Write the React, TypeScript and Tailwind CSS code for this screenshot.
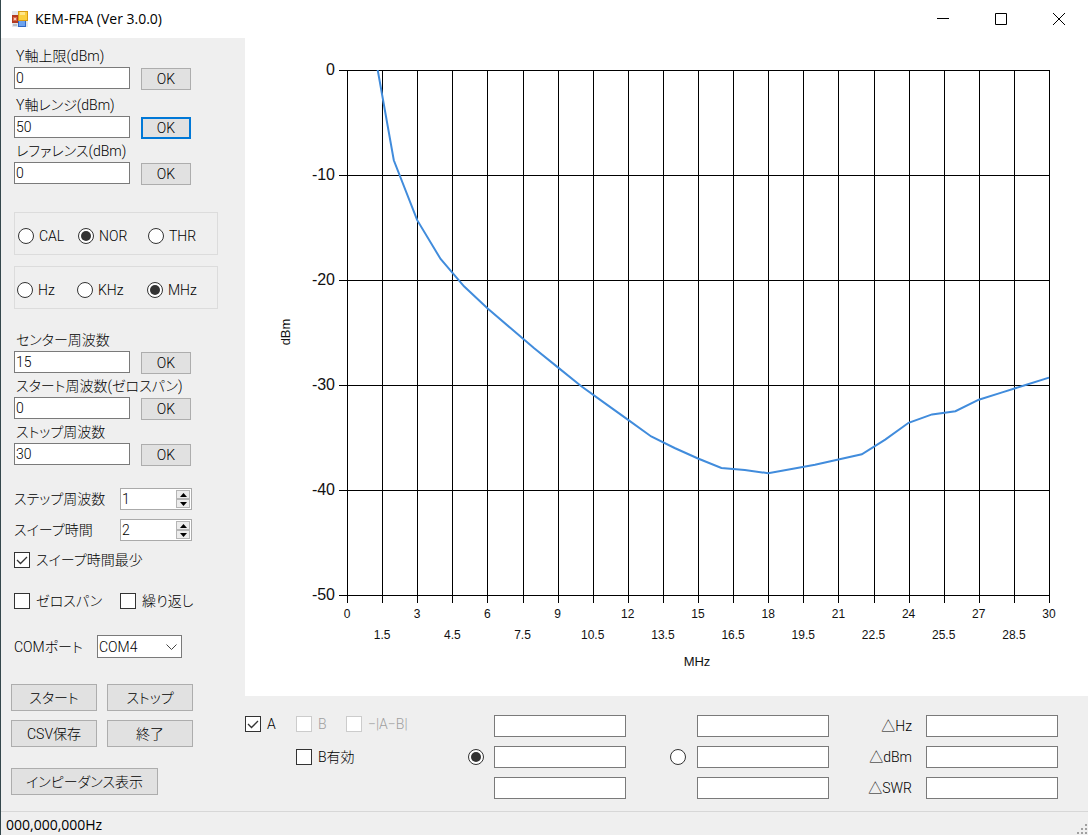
import type { ReactNode } from 'react'

// ── Sweep data: one reading per MHz, starting at 1 MHz ─────────
const READINGS = [
  3.9, -8.6, -14.3, -18, -20.6, -22.7, -24.6, -26.5, -28.3, -30.1, -31.7, -33.3, -34.9, -36, -37,
  -37.9, -38.1, -38.4, -38, -37.6, -37.1, -36.6, -35.2, -33.6, -32.8, -32.5, -31.4, -30.7, -30, -29.3,
]

const PLOT = { left: 102, top: 32, width: 702, height: 525 }
const X_TICKS = Array.from({ length: 21 }, (_, i) => i * 1.5)
const Y_TICKS = [0, -10, -20, -30, -40, -50]

const toX = (mhz: number) => PLOT.left + (mhz / 30) * PLOT.width
const toY = (dbm: number) => PLOT.top + (-dbm / 50) * PLOT.height

const BUTTON = 'border border-[#adadad] bg-[#e1e1e1] text-center hover:border-[#0078d7] hover:bg-[#e5f1fb]'
const TEXT_BOX = 'h-[22px] border border-[#7a7a7a] bg-white px-px text-sm leading-5 outline-none focus:border-[#0078d7]'

// ── Title bar ──────────────────────────────────────────────────
function AppIcon() {
  return (
    <svg width="18" height="18" viewBox="0 0 18 18" aria-hidden="true">
      <rect x="1" y="1" width="16" height="16" fill="#e3e6ea" />
      <rect x="1" y="5" width="6" height="8" fill="#b33a20" />
      <rect x="2" y="7" width="4" height="4" fill="#d9694a" />
      <rect x="3" y="8" width="2" height="2" fill="#f6c9b8" />
      <rect x="7" y="1" width="10" height="10" fill="#d99a12" />
      <rect x="8" y="2" width="8" height="8" fill="#fbcf3d" />
      <rect x="9" y="2" width="5" height="3" fill="#ffe68a" />
      <rect x="7" y="11" width="8" height="6" fill="#2f66c4" />
      <rect x="8" y="11" width="6" height="5" fill="#6ea3ee" />
      <rect x="2" y="14" width="4" height="2" fill="#b9bec6" />
    </svg>
  )
}

function TitleBar() {
  return (
    <header className="flex h-[38px] items-center bg-white pl-[10px] font-['Open_Sans',sans-serif] text-sm font-normal">
      <AppIcon />
      <h1 className="ml-[6px] flex-1">KEM-FRA (Ver 3.0.0)</h1>
      <button type="button" aria-label="Minimize" className="flex h-9 w-[58px] items-center justify-center hover:bg-gray-200">
        <svg width="12" height="12" viewBox="0 0 12 12" stroke="#000" fill="none"><path d="M0 5.5h12" /></svg>
      </button>
      <button type="button" aria-label="Maximize" className="flex h-9 w-[58px] items-center justify-center hover:bg-gray-200">
        <svg width="12" height="12" viewBox="0 0 12 12" stroke="#000" fill="none"><path d="M.5.5h11v11H.5z" /></svg>
      </button>
      <button type="button" aria-label="Close" className="flex h-9 w-[58px] items-center justify-center hover:bg-red-500">
        <svg width="12" height="12" viewBox="0 0 12 12" stroke="#000" fill="none"><path d="M0 0l12 12M12 0L0 12" /></svg>
      </button>
    </header>
  )
}

// ── Small controls ─────────────────────────────────────────────
function Field({ id, label, value, active }: { id: string; label: string; value: string; active?: boolean }) {
  return (
    <div>
      <label htmlFor={id} className="mb-[2px] block pl-[2px] leading-[18px]">{label}</label>
      <div className="flex items-end gap-[11px]">
        <input id={id} type="text" defaultValue={value} className={`${TEXT_BOX} mb-px w-[116px]`} />
        <button
          type="button"
          className={`h-[22px] w-[50px] ${active ? 'border-2 border-[#0078d7] bg-[#e1e1e1] leading-[18px]' : `${BUTTON} leading-5`}`}
        >
          OK
        </button>
      </div>
    </div>
  )
}

function Radio({ name, label, ariaLabel, checked }: { name: string; label?: string; ariaLabel?: string; checked?: boolean }) {
  return (
    <label className="flex items-center gap-[5px] leading-[18px]">
      <span className="relative size-4 shrink-0">
        <input
          type="radio"
          name={name}
          aria-label={ariaLabel}
          defaultChecked={checked}
          className="peer block size-4 appearance-none rounded-full border border-[#333] bg-white"
        />
        <span className="pointer-events-none absolute inset-[3px] hidden rounded-full bg-[#333] peer-checked:block" />
      </span>
      {label}
    </label>
  )
}

function Check({ children, checked, disabled }: { children: ReactNode; checked?: boolean; disabled?: boolean }) {
  return (
    <label className={`flex items-center gap-[6px] leading-[18px] ${disabled ? 'text-[#a0a0a0]' : ''}`}>
      <span className="relative size-4 shrink-0">
        <input
          type="checkbox"
          defaultChecked={checked}
          disabled={disabled}
          className="peer block size-4 appearance-none border border-[#333] bg-white disabled:border-[#ccc]"
        />
        <svg
          viewBox="0 0 16 16"
          className="pointer-events-none absolute inset-0 hidden size-4 fill-none stroke-[#333] peer-checked:block"
        >
          <path d="M3 8l3.5 3.5L13 5" strokeWidth="1.3" />
        </svg>
      </span>
      {children}
    </label>
  )
}

function Stepper({ id, label, value }: { id: string; label: string; value: string }) {
  return (
    <div className="flex h-[22px] items-center">
      <label htmlFor={id} className="w-[106px] leading-[18px]">{label}</label>
      <div className="flex h-[22px] w-[72px] border border-[#aaa] bg-white">
        <input id={id} type="text" inputMode="numeric" defaultValue={value} className="w-0 flex-1 px-px text-sm leading-5 outline-none" />
        <div className="flex w-4 flex-col p-px">
          <button type="button" aria-label={`${label} +`} className="flex h-[9px] items-center justify-center border border-[#b5b5b5] bg-[#ececec]">
            <svg width="7" height="4" viewBox="0 0 7 4"><path d="M0 4L3.5 0L7 4z" /></svg>
          </button>
          <button type="button" aria-label={`${label} -`} className="flex h-[9px] items-center justify-center border border-[#b5b5b5] bg-[#ececec]">
            <svg width="7" height="4" viewBox="0 0 7 4"><path d="M0 0L3.5 4L7 0z" /></svg>
          </button>
        </div>
      </div>
    </div>
  )
}

// ── Left panel ─────────────────────────────────────────────────
function Sidebar() {
  return (
    <aside className="w-[244px] shrink-0 pt-[9px] pb-4">
      <div className="px-[13px]">
        <Field id="y-max" label="Y軸上限(dBm)" value="0" />
        <div className="mt-[6px] flex flex-col gap-[3px]">
          <Field id="y-range" label="Y軸レンジ(dBm)" value="50" active />
          <Field id="reference" label="レファレンス(dBm)" value="0" />
        </div>

        <fieldset className="mt-[27px] grid h-[43px] w-[204px] grid-cols-[60px_70px_1fr] items-center border border-[#dcdcdc] pl-[3px] pt-[5px]">
          <Radio name="mode" label="CAL" />
          <Radio name="mode" label="NOR" checked />
          <Radio name="mode" label="THR" />
        </fieldset>
        <fieldset className="mt-[11px] grid h-[43px] w-[204px] grid-cols-[60px_70px_1fr] items-center border border-[#dcdcdc] pl-[2px] pt-[5px]">
          <Radio name="unit" label="Hz" />
          <Radio name="unit" label="KHz" />
          <Radio name="unit" label="MHz" checked />
        </fieldset>

        <div className="mt-[22px] flex flex-col gap-[3px]">
          <Field id="center" label="センター周波数" value="15" />
          <Field id="start" label="スタート周波数(ゼロスパン)" value="0" />
          <Field id="stop" label="ストップ周波数" value="30" />
        </div>

        <div className="mt-[22px] flex flex-col gap-[9px]">
          <Stepper id="step" label="ステップ周波数" value="1" />
          <Stepper id="sweep" label="スイープ時間" value="2" />
        </div>
        <div className="mt-[10px]">
          <Check checked>スイープ時間最少</Check>
        </div>
        <div className="mt-[23px] grid grid-cols-[106px_1fr]">
          <Check>ゼロスパン</Check>
          <Check>繰り返し</Check>
        </div>

        <div className="mt-[25px] flex items-center">
          <label htmlFor="com-port" className="w-[83px]">COMポート</label>
          <div className="relative">
            <select id="com-port" defaultValue="COM4" className="block h-[23px] w-[85px] appearance-none border border-[#7a7a7a] bg-white pl-px text-sm leading-5">
              <option>COM4</option>
            </select>
            <svg width="11" height="7" viewBox="0 0 11 7" className="pointer-events-none absolute right-[5px] top-[9px] fill-none stroke-[#444]">
              <path d="M.5.5l5 5l5-5" />
            </svg>
          </div>
        </div>
      </div>

      <div className="mt-[26px] grid grid-cols-[86px_86px] gap-x-[10px] gap-y-[9px] px-[10px]">
        <button type="button" className={`h-[27px] ${BUTTON}`}>スタート</button>
        <button type="button" className={`h-[27px] ${BUTTON}`}>ストップ</button>
        <button type="button" className={`h-[27px] ${BUTTON}`}>CSV保存</button>
        <button type="button" className={`h-[27px] ${BUTTON}`}>終了</button>
      </div>
      <button type="button" className={`ml-[10px] mt-[21px] block h-[27px] w-[147px] ${BUTTON}`}>インピーダンス表示</button>
    </aside>
  )
}

// ── Response chart ─────────────────────────────────────────────
function Chart() {
  const bottom = PLOT.top + PLOT.height
  const right = PLOT.left + PLOT.width
  const points = READINGS.map((dbm, i) => `${toX(i + 1)},${toY(dbm)}`).join(' ')

  return (
    <svg viewBox="0 0 843 658" className="block w-full bg-white font-['Liberation_Sans',sans-serif] font-normal" role="img" aria-label="dBm / MHz">
      <defs>
        <clipPath id="plot">
          <rect x={PLOT.left} y={PLOT.top} width={PLOT.width + 2} height={PLOT.height} />
        </clipPath>
      </defs>
      <g stroke="#000" shapeRendering="crispEdges">
        {X_TICKS.map(t => {
          const x = Math.round(toX(t)) + 0.5
          return <line key={t} x1={x} x2={x} y1={PLOT.top} y2={bottom + 8} />
        })}
        {Y_TICKS.map(t => {
          const y = Math.round(toY(t)) + 0.5
          return <line key={t} x1={PLOT.left - 8} x2={right + 1} y1={y} y2={y} />
        })}
      </g>
      <polyline points={points} fill="none" stroke="#418cdc" strokeWidth="2" clipPath="url(#plot)" />
      <g fontSize="16" textAnchor="end" fill="#111">
        {Y_TICKS.map(t => (
          <text key={t} x={PLOT.left - 12} y={toY(t) + 5}>{t}</text>
        ))}
      </g>
      <g fontSize="12" textAnchor="middle" fill="#111">
        {X_TICKS.map((t, i) => (
          <text key={t} x={toX(t)} y={bottom + (i % 2 ? 44 : 23)}>{t}</text>
        ))}
      </g>
      <g fontSize="13" textAnchor="middle" fill="#111">
        <text x={PLOT.left + PLOT.width / 2 - 1} y="628">MHz</text>
        <text transform="translate(45 294) rotate(-90)">dBm</text>
      </g>
    </svg>
  )
}

// ── Traces and markers ─────────────────────────────────────────
function MarkerBoxes({ name }: { name: string }) {
  return (
    <div className="flex flex-col gap-[9px]">
      {['Hz', 'dBm', 'SWR'].map(unit => (
        <input key={unit} type="text" aria-label={`${name} ${unit}`} className={`${TEXT_BOX} w-[132px]`} />
      ))}
    </div>
  )
}

function MarkerPanel() {
  return (
    <div className="flex items-center pb-3 pr-[30px] pt-[19px]">
      <div className="grid flex-1 grid-cols-[51px_50px_1fr] gap-y-[15px] self-start">
        <Check checked>A</Check>
        <Check disabled>B</Check>
        <Check disabled>−|A−B|</Check>
        <div className="col-span-2 col-start-2">
          <Check>B有効</Check>
        </div>
      </div>
      <div className="flex items-center gap-[10px]">
        <Radio name="marker" ariaLabel="Marker 1" checked />
        <MarkerBoxes name="Marker 1" />
      </div>
      <div className="ml-[44px] flex items-center gap-[11px]">
        <Radio name="marker" ariaLabel="Marker 2" />
        <MarkerBoxes name="Marker 2" />
      </div>
      <div className="ml-[35px] flex flex-col gap-[9px]">
        {['Hz', 'dBm', 'SWR'].map(unit => (
          <label key={unit} className="flex h-[22px] items-center gap-[14px]">
            <span className="w-12 text-right whitespace-nowrap">△{unit}</span>
            <input type="text" className={`${TEXT_BOX} w-[132px]`} />
          </label>
        ))}
      </div>
    </div>
  )
}

function StatusBar() {
  return (
    <footer className="flex h-6 items-center justify-between border-t border-[#d7d7d7] pl-[5px] font-['Open_Sans',sans-serif] text-sm font-normal">
      <span className="pt-[3px]">000,000,000Hz</span>
      <svg width="12" height="12" viewBox="0 0 12 12" className="self-end fill-[#a0a0a0]" aria-hidden="true">
        <path d="M9 1h2v2h-2zM5 5h2v2h-2zM9 5h2v2h-2zM1 9h2v2h-2zM5 9h2v2h-2zM9 9h2v2h-2z" />
      </svg>
    </footer>
  )
}

export default function App() {
  return (
    <div className="flex min-h-screen flex-col border-l border-[#34474c] bg-[#efefef] font-['Roboto','Noto_Sans_CJK_JP',sans-serif] text-sm font-light text-black [font-feature-settings:'palt']">
      <TitleBar />
      <div className="flex flex-1">
        <Sidebar />
        <main className="min-w-0 flex-1">
          <Chart />
          <MarkerPanel />
        </main>
      </div>
      <StatusBar />
    </div>
  )
}
